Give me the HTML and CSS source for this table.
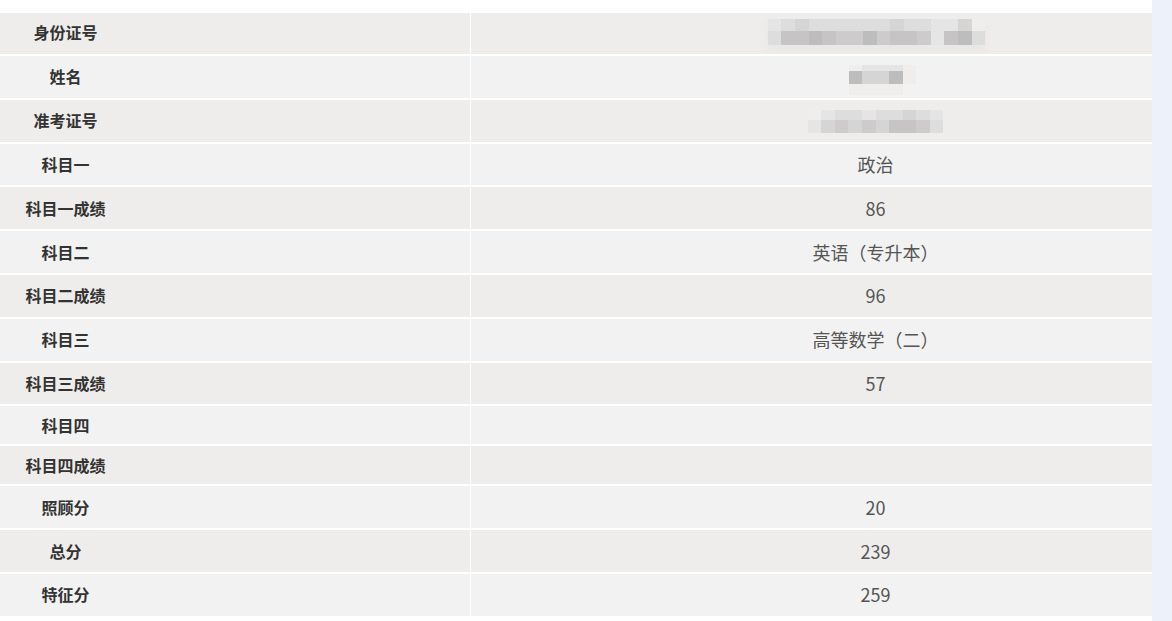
FILE: index.html
```html
<!DOCTYPE html>
<html lang="zh-CN">
<head>
<meta charset="utf-8">
<title>成绩查询</title>
<link rel="stylesheet" href="styles.css">
</head>
<body>
<div class="page">
  <div class="main">
    <div class="scroller">
      <table class="info">
        <tbody>
          <tr class="r first">
            <th>身份证号</th>
            <td>
              <span class="mosaic m-id">
                <i class="c1"></i><i class="c2"></i><i class="c3"></i><i class="c2"></i><i class="c2"></i><i class="c2"></i><i class="c2"></i><i class="c2"></i><i class="c2"></i><i class="c3"></i><i class="c2"></i><i class="c2"></i><i class="c1"></i><i class="c1"></i><i class="c3"></i><i class="c0"></i>
                <i class="c2"></i><i class="c5"></i><i class="c5"></i><i class="c6"></i><i class="c5"></i><i class="c4"></i><i class="c4"></i><i class="c6"></i><i class="c4"></i><i class="c5"></i><i class="c5"></i><i class="c4"></i><i class="c1"></i><i class="c5"></i><i class="c6"></i><i class="c2"></i>
              </span>
            </td>
          </tr>
          <tr class="r">
            <th>姓名</th>
            <td>
              <span class="mosaic m-name">
                <i class="c0"></i><i class="c1"></i><i class="c1"></i><i class="c1"></i><i class="c0"></i>
                <i class="c6"></i><i class="c3"></i><i class="c3"></i><i class="c6"></i><i class="c0"></i>
                <i class="c0"></i><i class="c0"></i><i class="c0"></i><i class="c0"></i><i class="cx"></i>
              </span>
            </td>
          </tr>
          <tr class="r">
            <th>准考证号</th>
            <td>
              <span class="mosaic m-exam">
                <i class="c0"></i><i class="c1"></i><i class="c2"></i><i class="c2"></i><i class="c1"></i><i class="c2"></i><i class="c2"></i><i class="c3"></i><i class="c2"></i><i class="c1"></i>
                <i class="c1"></i><i class="c3"></i><i class="c4"></i><i class="c3"></i><i class="c4"></i><i class="c3"></i><i class="c5"></i><i class="c5"></i><i class="c4"></i><i class="c2"></i>
              </span>
            </td>
          </tr>
          <tr class="r"><th>科目一</th><td>政治</td></tr>
          <tr class="r"><th>科目一成绩</th><td>86</td></tr>
          <tr class="r"><th>科目二</th><td>英语（专升本）</td></tr>
          <tr class="r"><th>科目二成绩</th><td>96</td></tr>
          <tr class="r"><th>科目三</th><td>高等数学（二）</td></tr>
          <tr class="r"><th>科目三成绩</th><td>57</td></tr>
          <tr class="r empty"><th>科目四</th><td></td></tr>
          <tr class="r empty"><th>科目四成绩</th><td></td></tr>
          <tr class="r"><th>照顾分</th><td>20</td></tr>
          <tr class="r"><th>总分</th><td>239</td></tr>
          <tr class="r"><th>特征分</th><td>259</td></tr>
        </tbody>
      </table>
    </div>
  </div>
  <div class="side"></div>
</div>
</body>
</html>
```

FILE: styles.css
```css
html, body {
  margin: 0;
  padding: 0;
  height: 100%;
  overflow: hidden;
}

body {
  font-family: "Microsoft YaHei", "Noto Sans CJK SC", "Noto Sans", sans-serif;
  background: #ffffff;
}

.page {
  display: flex;
  width: 1172px;
  height: 621px;
}

.main {
  width: 1152px;
  flex: 0 0 1152px;
  background: #ffffff;
  padding-top: 11px;
  box-sizing: border-box;
}

.side {
  flex: 1 1 auto;
  background: #edf1fa;
}

.scroller {
  width: 1152px;
  overflow: hidden;
}

.info {
  border-collapse: separate;
  border-spacing: 1px 2px;
  table-layout: fixed;
  width: 1621px;
  margin-left: -340px;
}

.info th,
.info td {
  width: 809px;
  height: 40.8px;
  padding: 0 0 1px 0;
  text-align: center;
  vertical-align: middle;
  line-height: 20px;
}

.info th {
  font-size: 16px;
  font-weight: bold;
  color: #333333;
}

.info td {
  font-size: 18px;
  font-weight: normal;
  color: #555555;
}

.info tr.first th,
.info tr.first td {
  height: 38px;
  padding-bottom: 3px;
}

.info tr.empty th,
.info tr.empty td {
  height: 38px;
  padding-bottom: 0;
}

.info tr:nth-child(odd) th,
.info tr:nth-child(odd) td {
  background: #eeedeb;
}

.info tr:nth-child(even) th,
.info tr:nth-child(even) td {
  background: #f2f2f2;
}

/* blurred placeholders */
.mosaic {
  display: inline-grid;
  vertical-align: middle;
}

.mosaic i {
  display: block;
}

.m-id {
  grid-template-columns: repeat(16, 13.6px);
  grid-template-rows: 12px 14px;
  margin: 0 0 0 2px;
  box-shadow: 0 4px 6px rgba(230, 229, 228, 0.8);
}

.m-name {
  grid-template-columns: repeat(5, 13.5px);
  grid-template-rows: 6px 13px 11px;
  margin: 8px 0 0 14px;
}

.m-exam {
  grid-template-columns: repeat(10, 13.6px);
  grid-template-rows: 10px 13px;
  margin: 0;
}

.c0 { background: #efeeed; }
.cx { background: transparent; }
.c1 { background: #e6e5e5; }
.c2 { background: #dedddd; }
.c3 { background: #d6d5d5; }
.c4 { background: #cdcbcb; }
.c5 { background: #c6c4c4; }
.c6 { background: #bebdbd; }
```
